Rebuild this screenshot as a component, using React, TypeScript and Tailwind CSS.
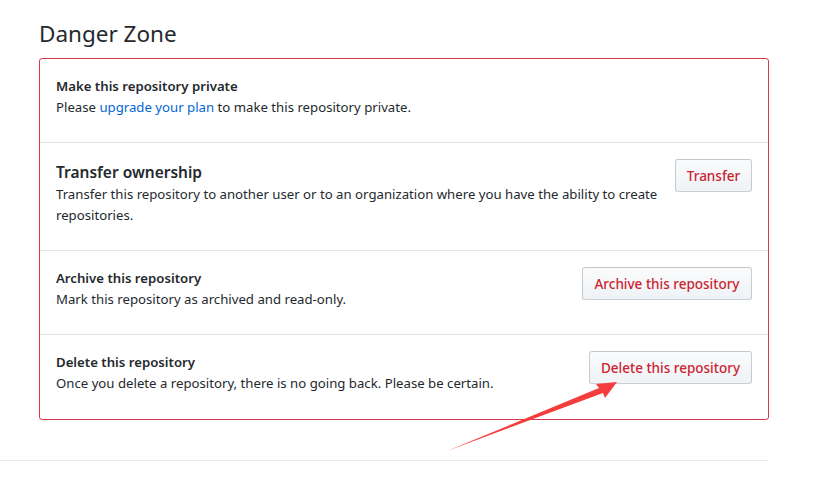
import React from "react";

const font = { fontFamily: '"Noto Sans", "Open Sans", sans-serif' };

type Row = {
  title: string;
  big?: boolean;
  desc: React.ReactNode;
  action?: string;
  btnWidth?: string;
};

const rows: Row[] = [
  {
    title: "Make this repository private",
    desc: (
      <>
        Please <a className="text-[#0366d6]">upgrade your plan</a> to make this repository private.
      </>
    ),
  },
  {
    title: "Transfer ownership",
    big: true,
    desc: "Transfer this repository to another user or to an organization where you have the ability to create repositories.",
    action: "Transfer",
    btnWidth: "w-[77px]",
  },
  {
    title: "Archive this repository",
    desc: "Mark this repository as archived and read-only.",
    action: "Archive this repository",
    btnWidth: "w-[170px]",
  },
  {
    title: "Delete this repository",
    desc: "Once you delete a repository, there is no going back. Please be certain.",
    action: "Delete this repository",
    btnWidth: "w-[163px]",
  },
];

function DangerButton({ label, width }: { label: string; width?: string }) {
  return (
    <button
      className={`${width} h-[33px] shrink-0 rounded-[3px] border border-[#1b1f2333] bg-gradient-to-b from-[#fafbfc] to-[#eff3f6] pt-px text-center text-[13.5px] font-medium text-[#cb2431]`}
    >
      {label}
    </button>
  );
}

export default function App() {
  return (
    <div className="relative h-[488px] w-[840px] bg-white text-[#24292e]" style={font}>
      <div className="w-[768px]">
        <div className="pl-[39px] pt-[18px]">
          <h2 className="text-[22.5px] font-normal leading-[32px] text-[#24292e]">Danger Zone</h2>
          <div className="mt-[8px] w-[730px] rounded-[3px] border border-[#d73a49]">
            {rows.map((r, i) => (
              <div
                key={r.title}
                className={`flex items-start justify-between gap-4 pl-4 pr-4 pt-[16px] ${
                  i === rows.length - 1 ? "pb-[25px]" : "pb-[24px]"
                } ${i > 0 ? "border-t border-[#e1e4e8]" : ""}`}
              >
                <div className="min-w-0 pt-px">
                  <h4
                    className={
                      r.big
                        ? "text-[15.5px] font-semibold leading-[24px]"
                        : "text-[13.2px] font-semibold leading-[21px]"
                    }
                  >
                    {r.title}
                  </h4>
                  <p className="text-[13.2px] leading-[21px]">{r.desc}</p>
                </div>
                {r.action && <DangerButton label={r.action} width={r.btnWidth} />}
              </div>
            ))}
          </div>
        </div>
        <div className="mt-[40px] border-t border-[#e8eaed]" />
      </div>

      {/* annotation arrow pointing at the delete button */}
      <svg className="pointer-events-none absolute left-0 top-0" width="840" height="488">
        <polygon
          points="447,451 599,388 596,384 617,382 605,398 603,393"
          fill="#f53d3d"
        />
      </svg>
    </div>
  );
}
